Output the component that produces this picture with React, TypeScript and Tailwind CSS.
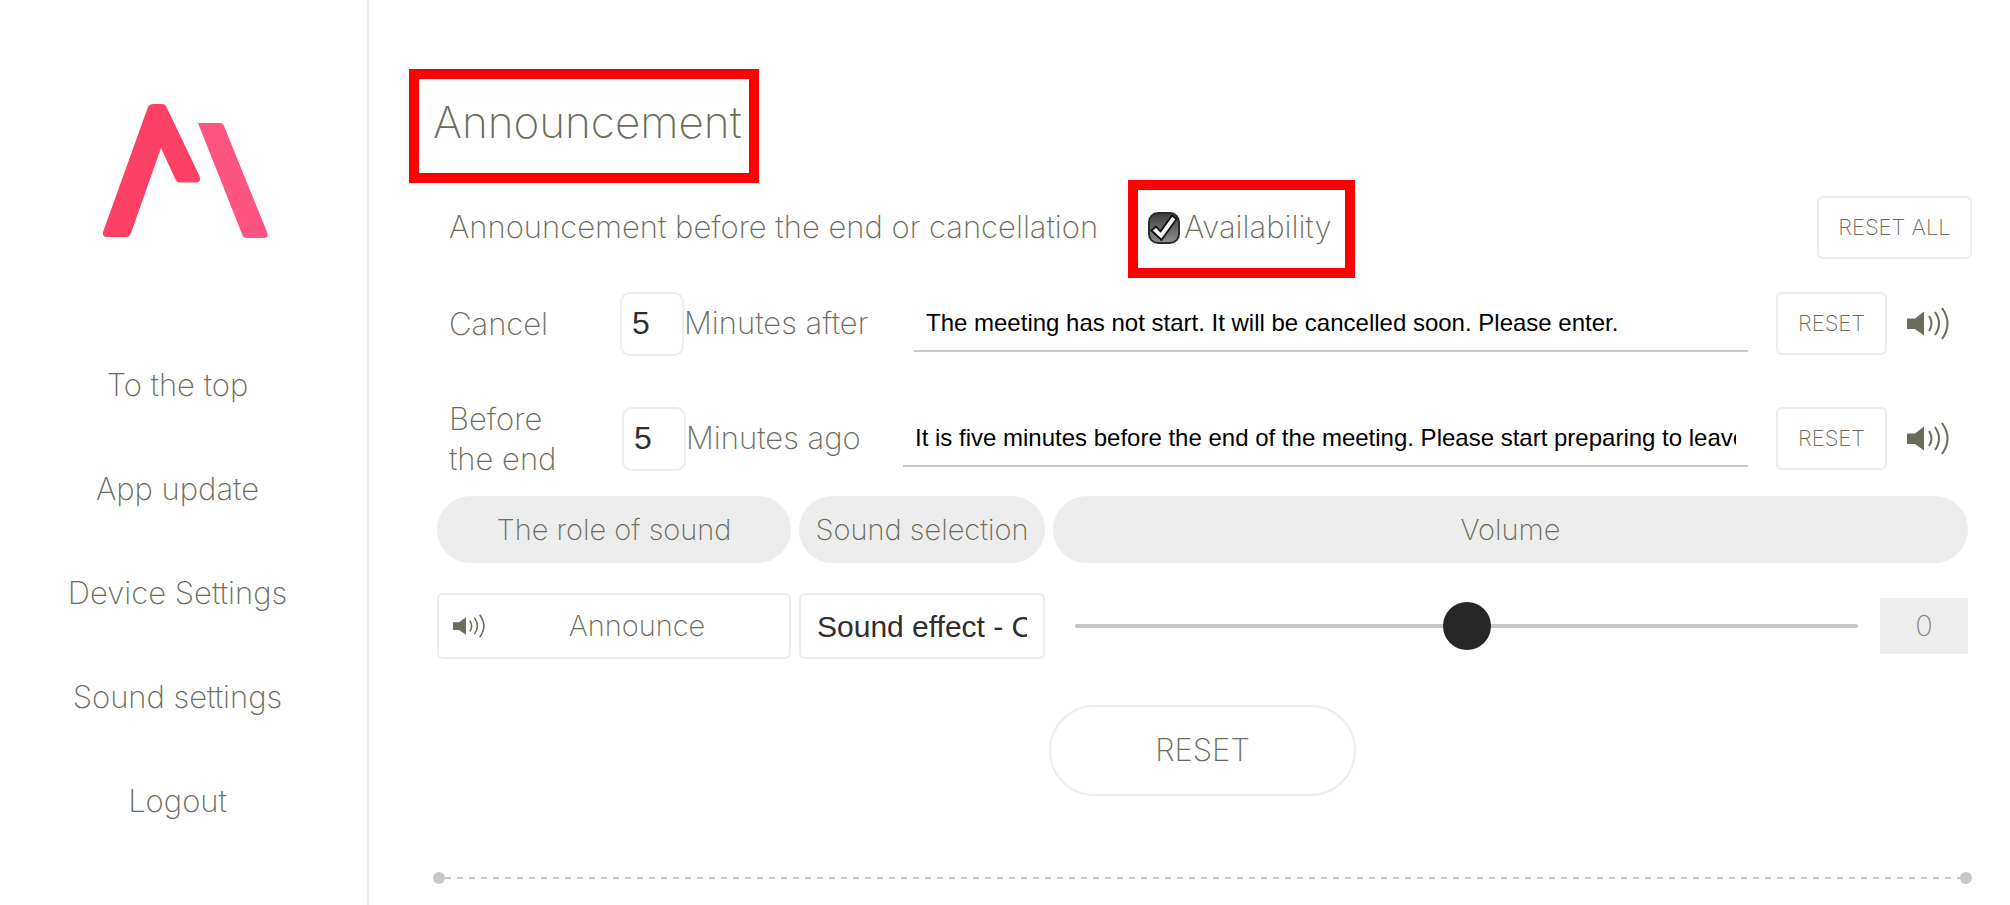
import { useState } from 'react';

const NAV_ITEMS = [
  { href: '#top', label: 'To the top' },
  { href: '#update', label: 'App update' },
  { href: '#device', label: 'Device Settings' },
  { href: '#sound', label: 'Sound settings' },
  { href: '#logout', label: 'Logout' },
] as const;

export default function App() {
  return (
    <div className="flex min-h-screen bg-[#fefefe] font-['Inter',sans-serif] text-[31px] font-extralight text-[#6b6d5c]">
      <Sidebar />
      <main className="flex min-w-0 flex-1 flex-col pt-[69px] pr-[38px] pl-10">
        <h1 className="h-[114px] w-[350px] border-10 border-[#ff0000] pl-[14px] text-[44px] leading-[86px] whitespace-nowrap">
          Announcement
        </h1>
        <AnnouncementForm />
        <section className="flex flex-col pr-1 pl-7">
          <SoundTable />
          <button
            type="button"
            className="mt-[46px] h-[91px] w-[307px] self-center rounded-full border-2 border-[#ededed]"
          >
            RESET
          </button>
        </section>
        <Divider />
      </main>
    </div>
  );
}

function Sidebar() {
  return (
    <aside className="w-[369px] shrink-0 border-r-2 border-[#ededed] pt-[100px]">
      <Logo />
      <nav className="mt-[119px] flex flex-col items-center gap-14 pr-3">
        {NAV_ITEMS.map((item) => (
          <a key={item.href} href={item.href} className="leading-[48px]">
            {item.label}
          </a>
        ))}
      </nav>
    </aside>
  );
}

function AnnouncementForm() {
  const [enabled, setEnabled] = useState(true);
  return (
    <form className="mt-[13px] flex flex-col pl-10">
      <div className="flex h-[63px] items-center">
        <span className="w-[699px] shrink-0">Announcement before the end or cancellation</span>
        <label className="relative flex h-[63px] items-center gap-1">
          <span className="absolute -top-4 -right-6 -bottom-[19px] -left-5 border-10 border-[#ff0000]" />
          <span className="relative flex">
            <input
              type="checkbox"
              checked={enabled}
              onChange={(e) => setEnabled(e.target.checked)}
              className="size-8 appearance-none rounded-[10px] border-2 border-[#2b2b2b] bg-linear-to-b from-[#3f3f3f] to-[#8f8f8f]"
            />
            {enabled && <CheckMark />}
          </span>
          Availability
        </label>
        <ResetButton label="RESET ALL" className="ml-auto w-[155px]" />
      </div>
      <MessageRow
        id="cancel"
        label="Cancel"
        labelClass="w-[171px]"
        unit="Minutes after"
        unitClass="w-[230px]"
        message="The meeting has not start. It will be cancelled soon. Please enter."
      />
      <MessageRow
        id="end"
        label="Before the end"
        labelClass="w-[173px]"
        unit="Minutes ago"
        unitClass="w-[217px]"
        message="It is five minutes before the end of the meeting. Please start preparing to leave the room."
      />
    </form>
  );
}

type MessageRowProps = {
  id: string;
  label: string;
  labelClass: string;
  unit: string;
  unitClass: string;
  message: string;
};

function MessageRow({ id, label, labelClass, unit, unitClass, message }: MessageRowProps) {
  return (
    <div className="flex h-[115px] items-center pt-[14px] pr-[23px]">
      <label htmlFor={`${id}-minutes`} className={`shrink-0 pr-14 leading-10 ${labelClass}`}>
        {label}
      </label>
      <input
        id={`${id}-minutes`}
        defaultValue="5"
        className="size-16 shrink-0 rounded-[10px] border-2 border-[#ededed] px-[10px] font-['Liberation_Sans',sans-serif] text-[32px] font-normal text-[#2f2f2f]"
      />
      <span className={`shrink-0 ${unitClass}`}>{unit}</span>
      <input
        aria-label={`${label} message`}
        defaultValue={message}
        className="h-14 min-w-0 flex-1 border-b-2 border-[#c8c8c8] px-3 font-['Liberation_Sans',sans-serif] text-2xl font-normal text-black"
      />
      <ResetButton label="RESET" className="ml-7 w-[111px]" />
      <button type="button" aria-label="Play" className="ml-5">
        <Speaker className="h-[33px] w-[42px]" />
      </button>
    </div>
  );
}

function ResetButton({ label, className }: { label: string; className: string }) {
  return (
    <button
      type="button"
      className={`h-[63px] shrink-0 rounded-md border-2 border-[#ededed] text-[22px] ${className}`}
    >
      {label}
    </button>
  );
}

function SoundTable() {
  const [volume, setVolume] = useState(0);
  return (
    <table className="mt-[7px] w-full border-separate border-spacing-0 text-[29px]">
      <thead>
        <tr>
          <th className="w-[362px] p-0 pr-2 font-extralight">
            <div className="h-[67px] rounded-full bg-[#ededed] leading-[67px]">The role of sound</div>
          </th>
          <th className="w-[254px] p-0 pr-2 font-extralight">
            <div className="h-[67px] rounded-full bg-[#ededed] leading-[67px]">Sound selection</div>
          </th>
          <th className="p-0 font-extralight">
            <div className="h-[67px] rounded-full bg-[#ededed] leading-[67px]">Volume</div>
          </th>
        </tr>
      </thead>
      <tbody>
        <tr>
          <td className="p-0 pt-[30px] pr-2">
            <div className="flex h-[66px] items-center rounded-md border-2 border-[#ededed] pl-[14px]">
              <Speaker className="h-6 w-8" />
              <span className="flex-1 text-center">Announce</span>
            </div>
          </td>
          <td className="p-0 pt-[30px] pr-2">
            <select
              aria-label="Sound selection"
              className="block h-[66px] w-full appearance-none rounded-md border-2 border-[#ededed] px-4 font-['Liberation_Sans',sans-serif] text-[30px] font-normal text-[#2f2f2f]"
            >
              <option>Sound effect - C</option>
            </select>
          </td>
          <td className="p-0 pt-[30px] pl-[22px]">
            <div className="flex items-center gap-[22px]">
              <input
                type="range"
                aria-label="Volume"
                min={-50}
                max={50}
                value={volume}
                onChange={(e) => setVolume(Number(e.target.value))}
                className="h-1 min-w-0 flex-1 appearance-none rounded-full bg-[#c6c6c6] [&::-webkit-slider-thumb]:size-12 [&::-webkit-slider-thumb]:appearance-none [&::-webkit-slider-thumb]:rounded-full [&::-webkit-slider-thumb]:bg-[#262626]"
              />
              <output className="h-14 w-[88px] bg-[#ededed] text-center leading-14 text-[#8a8a8a]">
                {volume}
              </output>
            </div>
          </td>
        </tr>
      </tbody>
    </table>
  );
}

function Divider() {
  return (
    <div className="mt-[76px] ml-6 flex items-center">
      <span className="size-3 rounded-full bg-[#c8c8c8]" />
      <span className="h-0.5 flex-1 bg-[repeating-linear-gradient(90deg,#c8c8c8_0_6px,transparent_6px_12px)]" />
      <span className="size-3 rounded-full bg-[#c8c8c8]" />
    </div>
  );
}

function Logo() {
  return (
    <svg viewBox="-3 0 174 142" className="mx-auto h-[142px] w-[174px]" aria-label="Logo" role="img">
      <path
        d="M54 4h8q3 0 4.500 3l33 69q2 6-3 6.500H80q-3 0-4.500-3L61 48 31 133q-1.500 4-5 4H7q-5 0-4-5L48 7q1.500-3 6-3Z"
        fill="#fd4066"
      />
      <path d="M98 23h22q3 0 4 3l43 106q2 6-3 6h-17q-4 0-5-4Z" fill="#fe5580" />
    </svg>
  );
}

function CheckMark() {
  return (
    <svg viewBox="0 0 32 32" className="pointer-events-none absolute inset-0" aria-hidden>
      <path
        d="M3.500 18.500l4.500-4 4.500 5L24 3.500l4.500 3.500L13.500 28Z"
        fill="#f4f4f4"
        stroke="#111"
        strokeWidth="1.800"
        strokeLinejoin="round"
      />
    </svg>
  );
}

function Speaker({ className }: { className: string }) {
  return (
    <svg viewBox="0 0 42 33" className={className} preserveAspectRatio="none" aria-hidden>
      <path d="M0 11.500h8L17 4.500v24L8 22H0Z" fill="#6b6d5c" />
      <path
        d="M22 9q5 7.500 0 15M28 5q8 11.500 0 23M35 1q11 15.500 0 31"
        fill="none"
        stroke="#6b6d5c"
        strokeWidth="2"
      />
    </svg>
  );
}
